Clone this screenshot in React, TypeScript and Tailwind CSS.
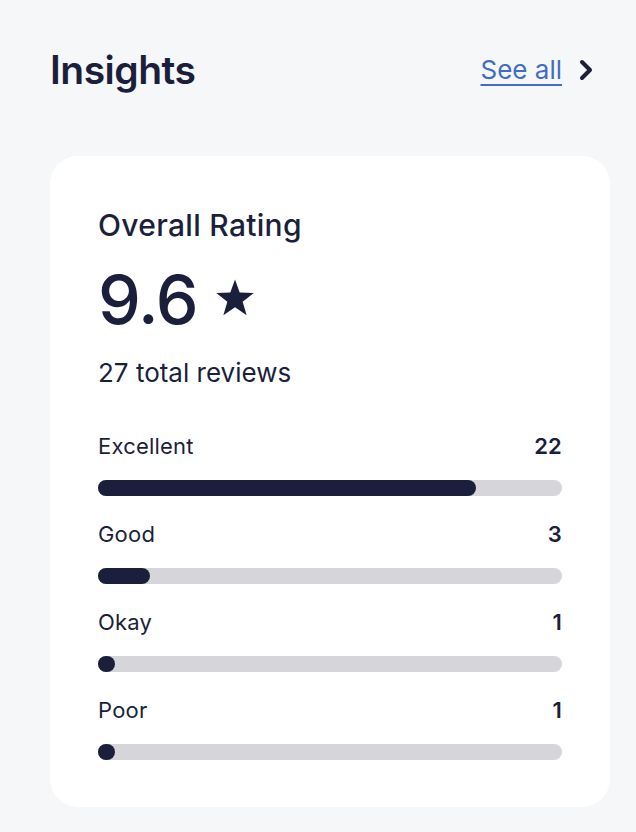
import React from "react";

const ratings = [
    { label: "Excellent", count: 22 },
    { label: "Good", count: 3 },
    { label: "Okay", count: 1 },
    { label: "Poor", count: 1 },
];

const total = 27;

export default function App() {
    return (
        <div className="min-h-[832px] bg-[#f6f7f9] pl-[50px] pr-[26px] pt-[46px] pb-[26px] text-[#1b1f3b] font-['Inter',sans-serif]">
            {/* Header */}
            <div className="flex items-center justify-between">
                <h2 className="text-[39px] leading-[48px] font-semibold tracking-[-0.5px]">Insights</h2>
                <a href="#" className="flex items-center gap-4 pr-4">
                    <span className="text-[26px] leading-[30px] text-[#3f6ec5] underline underline-offset-[5px] decoration-[2px]">See all</span>
                    <svg width="16" height="24" viewBox="0 0 16 24" fill="none">
                        <path d="M4 4 L12 12 L4 20" stroke="#1b1f3b" strokeWidth="4" strokeLinecap="round" strokeLinejoin="round" />
                    </svg>
                </a>
            </div>

            {/* Card */}
            <div className="mt-[62px] rounded-[28px] bg-white px-12 pt-[51px] pb-[47px]">
                <h3 className="text-[30px] leading-[36px] font-medium tracking-[0.3px]">Overall Rating</h3>
                <div className="mt-[21px] flex items-center gap-4">
                    <span className="text-[68px] leading-[70px] font-medium tracking-[-1px]">9.6</span>
                    <svg width="42" height="40" viewBox="0 0 24 23" className="mt-[-2px]">
                        <path d="M12 0.8 L14.7 8.4 L22.8 8.6 L16.4 13.6 L18.7 21.4 L12 16.8 L5.3 21.4 L7.6 13.6 L1.2 8.6 L9.3 8.4 Z" fill="#1b1f3b" />
                    </svg>
                </div>
                <p className="mt-[23px] text-[26px] leading-[32px]">27 total reviews</p>

                <div className="mt-[43px] flex flex-col gap-6">
                    {ratings.map(r => (
                        <div key={r.label} className="flex flex-col gap-5">
                            <div className="flex items-center justify-between text-[22px] leading-[28px] tracking-[0.2px]">
                                <span>{r.label}</span>
                                <span className="font-semibold">{r.count}</span>
                            </div>
                            <div className="h-4 w-full rounded-full bg-[#d5d5da]">
                                <div
                                    className="h-4 min-w-4 rounded-full bg-[#1b1f3b]"
                                    style={{ width: `${(r.count / total) * 100}%` }}
                                />
                            </div>
                        </div>
                    ))}
                </div>
            </div>
        </div>
    );
}
